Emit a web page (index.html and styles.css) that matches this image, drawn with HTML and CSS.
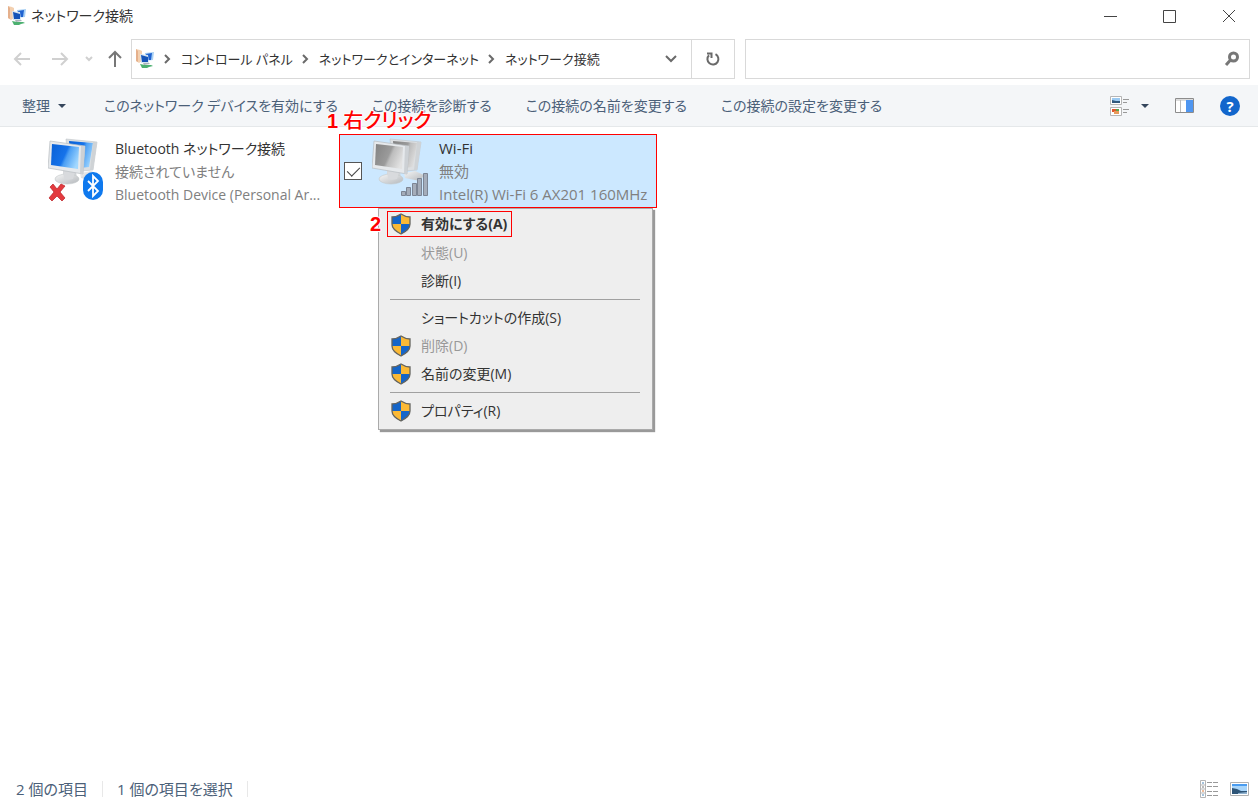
FILE: index.html
```
<!DOCTYPE html>
<html lang="ja">
<head>
    <meta charset="UTF-8">
    <meta name="viewport" content="width=device-width, initial-scale=1.0">
    <title>ネットワーク接続</title>
    <link rel="stylesheet" href="styles.css">
</head>
<body>
    <!-- Shared icons -->
    <svg class="defs" width="0" height="0" aria-hidden="true">
        <defs>
            <linearGradient id="blueScreen" x1="0" y1="0.2" x2="1" y2="0.6">
                <stop offset="0" stop-color="#0a62d8"/>
                <stop offset="0.5" stop-color="#1673ea"/>
                <stop offset="0.6" stop-color="#4c9ff4"/>
                <stop offset="1" stop-color="#a2d8ff"/>
            </linearGradient>
            <linearGradient id="grayScreen" x1="0" y1="0.2" x2="1" y2="0.6">
                <stop offset="0" stop-color="#858585"/>
                <stop offset="0.5" stop-color="#9b9b9b"/>
                <stop offset="0.6" stop-color="#bdbdbd"/>
                <stop offset="1" stop-color="#e2e2e2"/>
            </linearGradient>
            <linearGradient id="stand" x1="0" y1="0" x2="1" y2="1">
                <stop offset="0" stop-color="#f6f6f6"/>
                <stop offset="1" stop-color="#b4b8bc"/>
            </linearGradient>
        </defs>
        <symbol id="monitors" viewBox="0 0 56 64">
            <path d="M32 36l11-2 9 4-4 6-15-3z" fill="url(#stand)"/>
            <path d="M18 2l31 3-4 28-24 2z" fill="#dcdfe2" stroke="#c0c4c8" stroke-width=".6"/>
            <path d="M21 4l24 2-4 24-18 2z" class="screen"/>
            <path d="M45 5l4 0-4 28-3 0z" fill="#cfd3d6"/>
            <path d="M15 32l13 2 1 8-14 0z" fill="#d0d3d6"/>
            <ellipse cx="19" cy="42" rx="12" ry="5" fill="url(#stand)" stroke="#c3c7ca" stroke-width=".6"/>
            <path d="M15 33l12 2-2 7c-3 1-7 1-9 0z" fill="#d8dadd"/>
            <path d="M2 4l35 5-2 28-35-6z" fill="#e6e9ec" stroke="#b8bdc1" stroke-width=".7"/>
            <path d="M4 7l27 3-1 22-27-4z" class="screen"/>
            <path d="M33 9l4 0-2 28-3-1z" fill="#cdd1d5"/>
        </symbol>
        <symbol id="shield" viewBox="0 0 20 22">
            <path d="M10 1C7 3 4 4 1 4v7c0 5 5 8 9 10z" fill="#1565c8"/>
            <path d="M10 1c3 2 6 3 9 3v7c0 5-5 8-9 10z" fill="#fbb936"/>
            <path d="M1 11h9v10c-4-2-9-5-9-10z" fill="#fbb936"/>
            <path d="M10 11h9c0 5-5 8-9 10z" fill="#1565c8"/>
            <path d="M10 1C7 3 4 4 1 4v7c0 5 5 8 9 10 4-2 9-5 9-10V4c-3 0-6-1-9-3z" fill="none" stroke="#64645f" stroke-width="1.3"/>
        </symbol>
        <symbol id="netfolder" viewBox="0 0 20 20">
            <path d="M1 0l4 1 2 1v10l-3 2-3-2z" fill="#f3d0b0"/>
            <path d="M1 0l2 2v11l-2-1z" fill="#e5b08c"/>
            <path d="M10 4l9-1-1 8-8 1z" fill="#a8d0f4"/>
            <path d="M11 5l6-1-1 7-5 0z" fill="#1f62d0"/>
            <path d="M5 5l8 1 1 8-8 0z" fill="#d4e4f0"/>
            <path d="M6 6l7 2 0 5-6 0z" fill="#1453b7"/>
            <path d="M8 14l6 0 1 1-6 1z" fill="#aab4ba"/>
            <path d="M5 15l5 1 6 0 2 1-4 1-2 1H7z" fill="#4cb070"/>
        </symbol>
        <symbol id="crumb" viewBox="0 0 8 10">
            <path d="M2 1l4 4-4 4" fill="none" stroke="#6a6a6a" stroke-width="2"/>
        </symbol>
    </svg>

    <div class="window">
        <header class="titlebar">
            <svg class="icon-app"><use href="#netfolder"/></svg>
            <h1>ネットワーク接続</h1>
            <div class="caption-buttons">
                <button type="button" aria-label="最小化"><svg width="14" height="14"><path d="M0 7.5h13"/></svg></button>
                <button type="button" aria-label="最大化"><svg width="14" height="14"><path d="M.5 1.5h12v12h-12z"/></svg></button>
                <button type="button" aria-label="閉じる"><svg width="14" height="14"><path d="M1 1l12 12M13 1L1 13"/></svg></button>
            </div>
        </header>

        <nav class="navbar">
            <div class="history">
                <button type="button" class="dim" aria-label="戻る" disabled><svg width="18" height="14"><path d="M17 7H2M8 1L2 7l6 6"/></svg></button>
                <button type="button" class="dim" aria-label="進む" disabled><svg width="18" height="14"><path d="M1 7h15M10 1l6 6-6 6"/></svg></button>
                <button type="button" class="dim recent" aria-label="最近の場所"><svg width="8" height="6"><path d="M1 1l3 3 3-3"/></svg></button>
                <button type="button" class="up" aria-label="上へ"><svg width="14" height="18"><path d="M7 17V2M1 8l6-6 6 6"/></svg></button>
            </div>
            <div class="address">
                <svg class="icon-app"><use href="#netfolder"/></svg>
                <ol class="crumbs">
                    <li><svg width="8" height="10"><use href="#crumb"/></svg><a href="#">コントロール パネル</a></li>
                    <li><svg width="8" height="10"><use href="#crumb"/></svg><a href="#">ネットワークとインターネット</a></li>
                    <li><svg width="8" height="10"><use href="#crumb"/></svg><a href="#">ネットワーク接続</a></li>
                </ol>
                <button type="button" class="drop" aria-label="履歴"><svg width="14" height="10"><path d="M2 2l5 5 5-5"/></svg></button>
                <button type="button" class="refresh" aria-label="更新"><svg width="16" height="16"><path d="M10.5 3.2A5.5 5.5 0 1 1 4 4.2M2 2.5h4.5V7"/></svg></button>
            </div>
            <div class="search">
                <input type="search" aria-label="検索">
                <svg width="16" height="16"><circle cx="9.5" cy="6" r="4"/><path d="M6.500 9L2 14"/></svg>
            </div>
        </nav>

        <div class="commandbar">
            <button type="button" class="organize">整理<span class="caret"></span></button>
            <button type="button">このネットワーク デバイスを有効にする</button>
            <button type="button">この接続を診断する</button>
            <button type="button">この接続の名前を変更する</button>
            <button type="button">この接続の設定を変更する</button>
            <div class="view-tools">
                <button type="button" class="view-mode" aria-label="表示方法の変更">
                    <svg width="19" height="20">
                        <path d="M.5.5h11v8H.5zM.5 11.500h11v8H.5z" fill="#fff" stroke="#b5b5b5"/>
                        <path d="M2 2h8v3H2z" fill="#9bcaf2"/><path d="M2 4l4 1 4 0v2H2z" fill="#31587c"/>
                        <path d="M2 13h4v3H2z" fill="#e0552c"/><path d="M6 13h3v3H6z" fill="#58a64a"/><path d="M4 15h5v3H4z" fill="#e79a5b"/>
                        <path d="M13 3.500h6M13 6.500h4M13 13.500h6M13 16.500h4" stroke="#999"/>
                    </svg>
                    <span class="caret"></span>
                </button>
                <button type="button" aria-label="プレビュー ウィンドウ">
                    <svg width="19" height="15"><path d="M.5.5h18v14H.5z" fill="#fff" stroke="#8c8c8c"/><path d="M1 2h17" stroke="#bbb"/><path d="M5.500 2v12" stroke="#bbb"/><path d="M11 2h7v12h-7z" fill="#4f96f0"/></svg>
                </button>
                <button type="button" class="help" aria-label="ヘルプ">?</button>
            </div>
        </div>

        <main class="connections">
            <article class="tile">
                <div class="tile-icon">
                    <svg class="monitors blue"><use href="#monitors"/></svg>
                    <svg class="badge-error" viewBox="0 0 18 18"><path d="M2 4l3-3 4 5 4-5 4 2-5 6 5 6-3 3-5-5-5 5-3-3 5-6z" fill="#e33b3f" stroke="#ba2328" stroke-width=".7"/></svg>
                    <svg class="badge-bluetooth" viewBox="0 0 22 30"><rect x="1" y="1" width="20" height="28" rx="10" fill="#0f79ee"/><path d="M6 10l10 10-5 5V5l5 5L6 20" fill="none" stroke="#fff" stroke-width="1.800"/></svg>
                </div>
                <div class="tile-text">
                    <h2>Bluetooth ネットワーク接続</h2>
                    <p>接続されていません</p>
                    <p>Bluetooth Device (Personal Ar...</p>
                </div>
            </article>

            <article class="tile selected">
                <input type="checkbox" class="tile-check" aria-label="Wi-Fi を選択" checked>
                <div class="tile-icon">
                    <svg class="monitors gray"><use href="#monitors"/></svg>
                    <svg class="badge-signal" viewBox="0 0 28 23"><path d="M1.500 18.500h4v4h-4zM6.500 14.500h4v8h-4zM12.500 10.500h4v12h-4zM17.500 5.500h4v17h-4zM23.500.5h4v22h-4z" fill="#a5adba" stroke="#7c8594"/></svg>
                </div>
                <div class="tile-text">
                    <h2>Wi-Fi</h2>
                    <p>無効</p>
                    <p>Intel(R) Wi-Fi 6 AX201 160MHz</p>
                </div>
                <span class="note note-one"><b>1</b> 右クリック</span>

                <div class="menu" role="menu">
                    <button type="button" role="menuitem" class="default"><svg><use href="#shield"/></svg><span>有効にする(A)</span></button>
                    <button type="button" role="menuitem" disabled><span>状態(U)</span></button>
                    <button type="button" role="menuitem"><span>診断(I)</span></button>
                    <hr>
                    <button type="button" role="menuitem"><span>ショートカットの作成(S)</span></button>
                    <button type="button" role="menuitem" disabled><svg><use href="#shield"/></svg><span>削除(D)</span></button>
                    <button type="button" role="menuitem"><svg><use href="#shield"/></svg><span>名前の変更(M)</span></button>
                    <hr>
                    <button type="button" role="menuitem"><svg><use href="#shield"/></svg><span>プロパティ(R)</span></button>
                    <span class="note note-two"><b>2</b></span>
                </div>
            </article>
        </main>

        <footer class="statusbar">
            <span>2 個の項目</span>
            <span>1 個の項目を選択</span>
            <div class="layout-tools">
                <button type="button" aria-label="詳細">
                    <svg width="19" height="18"><path d="M.5.5h5v17h-5z" fill="#fff" stroke="#b5b5b5"/><path d="M1 5h4M1 9h4M1 13h4" stroke="#b5b5b5"/><path d="M2 3h2M2 15h2" stroke="#4b86b8"/><path d="M2 7h2" stroke="#777"/><path d="M2 11h2" stroke="#e07b35"/><path d="M7 2.500h5M13 2.500h5M7 6.500h5M13 6.500h5M7 11.500h5M13 11.500h5M7 15.500h5M13 15.500h5" stroke="#999"/></svg>
                </button>
                <button type="button" aria-label="大アイコン">
                    <svg width="19" height="14"><path d="M.5.5h18v13H.5z" fill="#fff" stroke="#b0b0b0"/><path d="M2 2h15v10H2z" fill="#a8d5fa"/><path d="M2 2h15v2H2z" fill="#4a9cf0"/><path d="M2 6l5 1 4 2 6 0v3H2z" fill="#2e5578"/><path d="M8 11l9-1v2H8z" fill="#8fb2cf"/></svg>
                </button>
            </div>
        </footer>
    </div>
</body>
</html>
```

FILE: styles.css
```
* {
    box-sizing: border-box;
}
body {
    margin: 0;
    background: #fff;
    color: #333;
    font-family: "Open Sans", "Noto Sans CJK JP", sans-serif;
    font-size: 14px;
    line-height: 24px;
    font-feature-settings: "palt";
}
h1, h2, p, ol {
    margin: 0;
    padding: 0;
    font-size: inherit;
    font-weight: normal;
}
button {
    display: flex;
    align-items: center;
    padding: 0;
    border: 0;
    background: none;
    color: inherit;
    font: inherit;
    font-feature-settings: inherit;
    white-space: nowrap;
}
svg {
    flex: none;
}
.defs {
    position: absolute;
}
.window {
    display: flex;
    flex-direction: column;
    height: 100vh;
}
.icon-app {
    width: 20px;
    height: 20px;
}

/* Title bar */
.titlebar {
    display: flex;
    align-items: center;
    gap: 4px;
    height: 32px;
    padding-left: 7px;
}
.caption-buttons {
    display: flex;
    margin-left: auto;
}
.caption-buttons button {
    justify-content: center;
    width: 59px;
    height: 32px;
}
.caption-buttons path {
    fill: none;
    stroke: #444;
}

/* Address row */
.navbar {
    display: flex;
    height: 53px;
    padding: 7px 8px 6px 13px;
}
.history {
    display: flex;
    flex: none;
    align-items: center;
    width: 118px;
    gap: 20px;
}
.history path {
    fill: none;
    stroke: #777;
    stroke-width: 2;
}
.history .dim path {
    stroke: #d0d0d0;
}
.history .recent {
    margin-left: -4px;
}
.history .up {
    margin-left: -5px;
}
.address {
    display: flex;
    flex: 600 1 0;
    align-items: center;
    padding-left: 3px;
    border: 1px solid #d9d9d9;
}
.crumbs {
    display: flex;
    font-size: 13px;
    list-style: none;
}
.crumbs li {
    display: flex;
    align-items: center;
}
.crumbs svg {
    margin: 0 10px 0 8px;
}
.crumbs a {
    color: #333;
    text-decoration: none;
    white-space: nowrap;
}
.drop {
    margin-left: auto;
    padding: 12px 13px;
}
.drop path,
.refresh path {
    fill: none;
    stroke: #6a6a6a;
    stroke-width: 2;
}
.refresh {
    align-self: stretch;
    justify-content: center;
    width: 43px;
    border-left: 1px solid #d9d9d9;
}
.search {
    display: flex;
    flex: 495 1 0;
    align-items: center;
    margin-left: 10px;
    padding-right: 9px;
    border: 1px solid #d9d9d9;
}
.search input {
    flex: 1;
    min-width: 0;
    border: 0;
    outline: 0;
    font: inherit;
}
.search svg {
    fill: none;
    stroke: #777;
    stroke-width: 3;
}

/* Command bar */
.commandbar {
    display: flex;
    align-items: center;
    gap: 34px;
    height: 42px;
    padding: 0 18px 0 22px;
    border-bottom: 1px solid #e5e8ea;
    background: #f4f6f8;
    color: #4b6078;
}
.caret {
    border: 4px solid transparent;
    border-top-color: #35465c;
    border-bottom: 0;
}
.organize {
    gap: 8px;
    padding-right: 4px;
}
.view-tools {
    display: flex;
    align-items: center;
    gap: 26px;
    margin-left: auto;
}
.view-mode {
    gap: 12px;
}
.help {
    justify-content: center;
    width: 20px;
    height: 20px;
    border-radius: 50%;
    background: #1266cc;
    color: #fff;
    font-size: 15px;
    font-weight: bold;
}

/* Connection tiles */
.connections {
    display: flex;
    flex: 1;
    align-items: flex-start;
    gap: 6px;
    padding: 7px 15px;
}
.tile {
    position: relative;
    display: flex;
    width: 318px;
    height: 74px;
    padding: 2px 5px 0 32px;
    border: 1px solid transparent;
}
.selected {
    border-color: #f00;
    background: #cce8ff;
}
.tile-icon {
    position: relative;
    flex: none;
    width: 56px;
    height: 64px;
    margin-right: 11px;
}
.monitors {
    width: 56px;
    height: 64px;
}
.blue {
    fill: url(#blueScreen);
}
.gray {
    fill: url(#grayScreen);
}
.badge-error {
    position: absolute;
    left: 0;
    bottom: 0;
    width: 18px;
    height: 18px;
}
.badge-bluetooth {
    position: absolute;
    right: 0;
    bottom: 0;
    width: 22px;
    height: 30px;
}
.badge-signal {
    position: absolute;
    right: 0;
    bottom: 5px;
    width: 28px;
    height: 23px;
}
.tile-check {
    position: absolute;
    top: 27px;
    left: 4px;
    width: 18px;
    height: 18px;
    margin: 0;
    border: 1px solid #555;
    background: #fff;
    appearance: none;
}
.tile-check:checked::after {
    content: "";
    position: absolute;
    top: 1px;
    left: 5px;
    width: 6px;
    height: 11px;
    border: solid #444;
    border-width: 0 1px 1px 0;
    transform: rotate(45deg);
}
.tile-text {
    min-width: 0;
}
.tile-text h2,
.tile-text p {
    line-height: 23px;
    white-space: nowrap;
}
.tile-text p {
    color: #808080;
}
.selected .tile-text {
    font-size: 15px;
}

/* Context menu */
.menu {
    position: absolute;
    top: 73px;
    left: 38px;
    width: 275px;
    padding: 2px 12px 4px 8px;
    border: 1px solid #aaa;
    background: #eee;
    box-shadow: 2px 2px 1px #999;
}
.menu button {
    width: 100%;
    height: 28px;
    padding-left: 34px;
}
.menu svg {
    width: 20px;
    height: 22px;
    margin: 0 10px 0 -30px;
}
.menu button:disabled {
    color: #999;
}
.menu .default {
    width: 125px;
    height: 26px;
    margin-bottom: 2px;
    padding-left: 33px;
    border: 1px solid #f00;
    font-weight: bold;
}
.menu hr {
    height: 1px;
    margin: 4px 0;
    margin-left: 3px;
    border: 0;
    background: #a0a0a0;
}

/* Red step notes */
.note {
    position: absolute;
    color: #f00;
    font-size: 20px;
    font-weight: 500;
    line-height: 24px;
    white-space: nowrap;
    text-shadow: 1px 0 #fff, -1px 0 #fff, 0 1px #fff, 0 -1px #fff;
}
.note b {
    font-family: "Liberation Sans", sans-serif;
}
.note-one {
    top: -26px;
    left: -13px;
}
.note-two {
    top: 3px;
    left: -9px;
}

/* Status bar */
.statusbar {
    display: flex;
    align-items: center;
    height: 22px;
    padding: 0 9px 0 16px;
    color: #4b6078;
    font-size: 15px;
}
.statusbar span {
    margin-right: 14px;
    padding-right: 14px;
    border-right: 1px solid #e8e8e8;
    line-height: 16px;
}
.layout-tools {
    display: flex;
    gap: 11px;
    margin-left: auto;
}
```
